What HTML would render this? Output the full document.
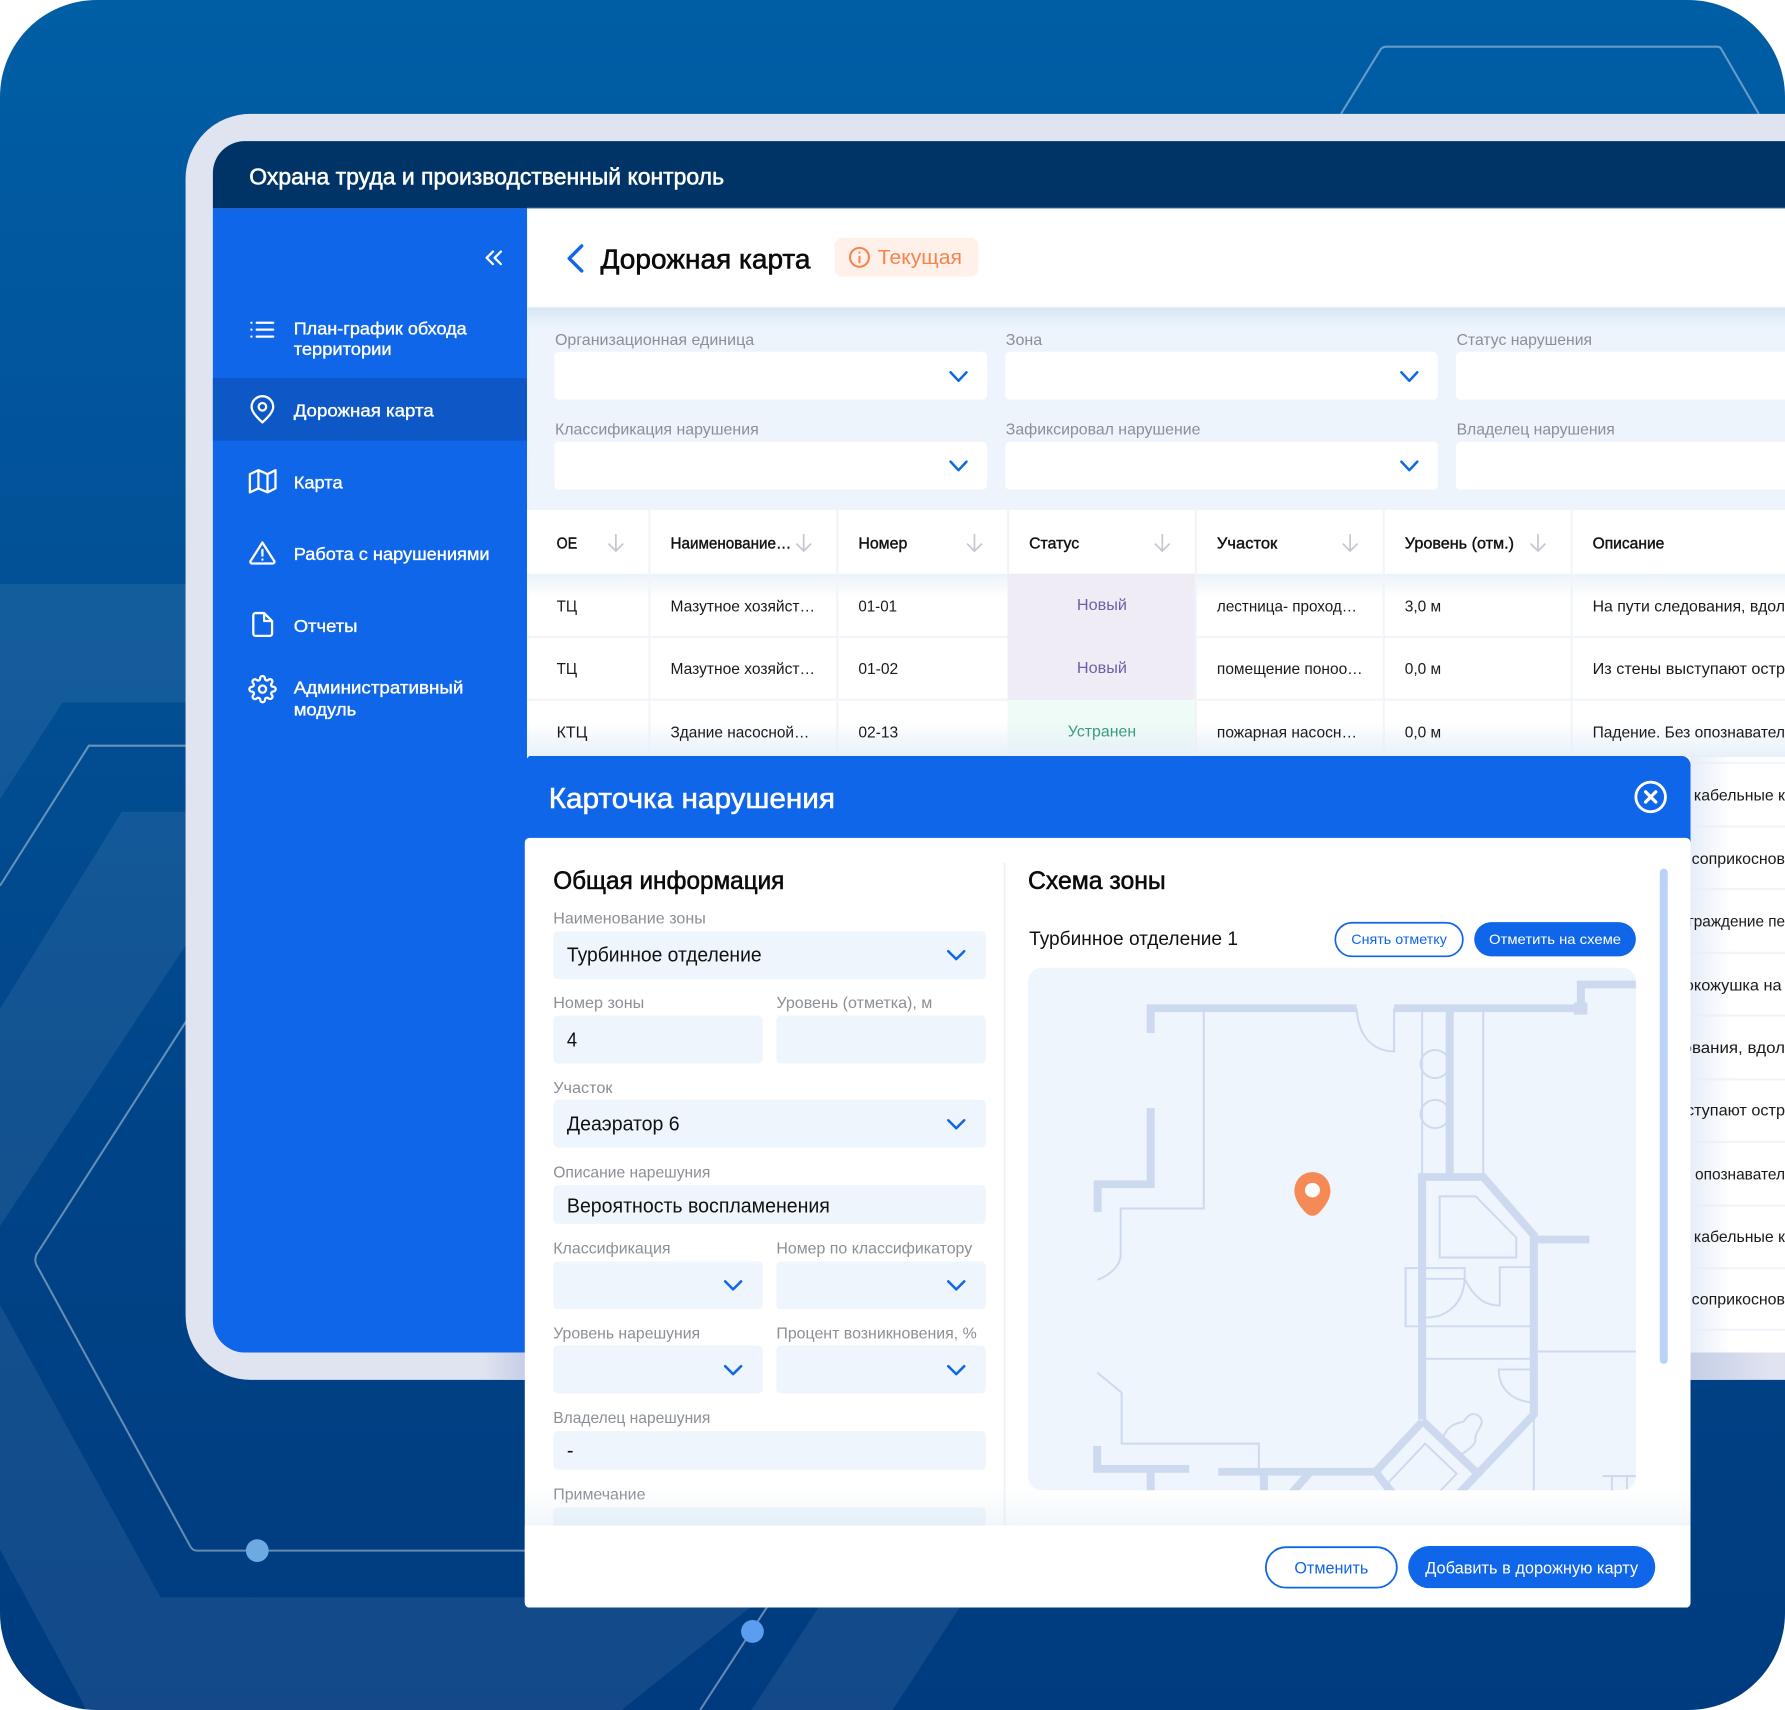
<!DOCTYPE html>
<html lang="ru"><head><meta charset="utf-8"><title>Карточка нарушения</title>
<style>
html,body{margin:0;padding:0;background:#fff}
svg{display:block}
text{font-family:"Liberation Sans",sans-serif;white-space:pre}
.m{stroke-width:.5px;paint-order:stroke}
.lb{font-size:14px;fill:#8b8f96}
.c{font-size:14px;fill:#1a1a1a}
.h{font-size:14px;fill:#111;stroke:#111;stroke-width:.35px}
.s{font-size:15.5px;fill:#fff;stroke:#fff;stroke-width:.32px}
.v{font-size:17.5px;fill:#111}
.w{fill:none;stroke:#cdd9ee;stroke-width:16}
.t{fill:none;stroke:#cdd9ee;stroke-width:4}
.ch{fill:none;stroke:#1066e8;stroke-width:2.2;stroke-linecap:round;stroke-linejoin:round}
.ar{fill:none;stroke:#c3c8d2;stroke-width:1.5}
.ic{fill:none;stroke:#fff;stroke-width:2;stroke-linecap:round;stroke-linejoin:round}
</style></head><body>
<svg xmlns="http://www.w3.org/2000/svg" width="1785" height="1710" viewBox="0 0 1568 1502" preserveAspectRatio="none">
<defs>
<linearGradient id="bg" x1="0" y1="0" x2="0" y2="1"><stop offset="0" stop-color="#005ea5"/><stop offset=".33" stop-color="#025197"/><stop offset=".7" stop-color="#004386"/><stop offset="1" stop-color="#003b7f"/></linearGradient>
<linearGradient id="fp" x1="0" y1="0" x2="0" y2="1"><stop offset="0" stop-color="#d6e7f4"/><stop offset="1" stop-color="#edf4fb"/></linearGradient>
<linearGradient id="rw" x1="0" y1="0" x2="0" y2="1"><stop offset="0" stop-color="#ecf3fa"/><stop offset="1" stop-color="#ecf3fa" stop-opacity="0"/></linearGradient>
<linearGradient id="up" x1="0" y1="1" x2="0" y2="0"><stop offset="0" stop-color="#e6eff8" stop-opacity=".95"/><stop offset="1" stop-color="#e6eff8" stop-opacity="0"/></linearGradient>
<linearGradient id="rt" x1="0" y1="0" x2="1" y2="0"><stop offset="0" stop-color="#e4ecf8" stop-opacity=".9"/><stop offset="1" stop-color="#e4ecf8" stop-opacity="0"/></linearGradient>
<linearGradient id="fr" x1="0" y1="0" x2="1" y2="0"><stop offset="0" stop-color="#c5cee6"/><stop offset="1" stop-color="#c5cee6" stop-opacity="0"/></linearGradient>
<linearGradient id="fl" x1="1" y1="0" x2="0" y2="0"><stop offset="0" stop-color="#c5cee6"/><stop offset="1" stop-color="#c5cee6" stop-opacity="0"/></linearGradient>
<linearGradient id="fd" x1="0" y1="0" x2="0" y2="1"><stop offset="0" stop-color="#dbe8f4" stop-opacity="0"/><stop offset="1" stop-color="#dbe8f4" stop-opacity=".38"/></linearGradient>
<clipPath id="mapc"><rect x="903" y="850" width="534" height="459" rx="12"/></clipPath>
<clipPath id="bgc"><rect width="1568" height="1502" rx="85"/></clipPath>
</defs>

<g clip-path="url(#bgc)">
<rect width="1568" height="1502" fill="url(#bg)"/>
<g fill="#fff" fill-opacity=".075">
<path d="M0,513H163V617H55L0,702Z"/>
<path d="M107,713H170V820L0,1077V886Z"/>
<path d="M0,1146L141,1403H670L546,1502H76L0,1361Z"/>
<path d="M719,1412H843L784,1502H660Z"/>
</g>
<g fill="none" stroke="#fff" stroke-opacity=".4" stroke-width="1.8">
<path d="M170,655H78L0,778"/>
<path d="M170,887L32,1102Q30,1107 32,1111L167,1358Q169,1362 173,1362H470"/>
<path d="M680,1402L615,1502"/>
<path d="M1178,100L1213,43Q1215,41 1218,41H1508Q1511,41 1512,43L1545,100"/>
</g>
<circle cx="226" cy="1362" r="10" fill="#6eaae2"/>
<circle cx="661" cy="1433" r="10" fill="#5c9df0"/>

<!-- frame -->
<path d="M1600,100H220A57,57 0 0 0 163,157V1155A57,57 0 0 0 220,1212H1600Z" fill="#e0e3f0"/>
<path d="M1600,124H215A28,28 0 0 0 187,152V183H1600Z" fill="#003366"/>
<rect x="463" y="183" width="1140" height="1005" fill="#fff"/>
<path d="M187,183H463V1188H215A28,28 0 0 1 187,1160Z" fill="#1066e8"/>
<rect x="187" y="332" width="276" height="55" fill="#0d57c6"/>
<rect x="463" y="182.5" width="1110" height="1" fill="#9fb4cf"/>
<text x="219" y="162" font-size="20" fill="#fff" stroke="#fff" class="m" textLength="417" lengthAdjust="spacingAndGlyphs">Охрана труда и производственный контроль</text>

<!-- sidebar -->
<path class="ic" d="M440,221L434.500,226.500L440,232M433,221L427.500,226.500L433,232" stroke-width="1.8"/>
<g class="ic">
<path d="M225.500,283.500H240M225.500,289.500H240M225.500,295.700H240"/>
<path d="M220.800,283.500h.1M220.800,289.500h.1M220.800,295.700h.1"/>
<path d="M230.500,371C226,367 221,362 221,357.500A9.500,9.500 0 0 1 240,357.500C240,362 235,367 230.500,371Z"/>
<circle cx="230.500" cy="357.300" r="3.300"/>
<path d="M219.500,416.500L227,413L235,416.500L242,413V429L235,432.500L227,429L219.500,432.500ZM227,413V429M235,416.500V432.500"/>
<path d="M230.500,476.500L220,493A1.500,1.500 0 0 0 221.300,495H239.700A1.500,1.500 0 0 0 241,493ZM230.500,483V488M230.500,491.500h.1"/>
<path d="M224.500,538.500H232L239,545.500V556.500A2,2 0 0 1 237,558.500H224.500A2,2 0 0 1 222.500,556.500V540.500A2,2 0 0 1 224.500,538.500ZM232,538.500V545.500H239"/>
<g transform="translate(218,592.700) scale(1.05)" stroke-width="1.9"><circle cx="12" cy="12" r="3"/><path d="M19.4 15a1.65 1.65 0 0 0 .33 1.82l.06.06a2 2 0 0 1 0 2.83 2 2 0 0 1-2.83 0l-.06-.06a1.65 1.65 0 0 0-1.82-.33 1.65 1.65 0 0 0-1 1.51V21a2 2 0 0 1-2 2 2 2 0 0 1-2-2v-.09A1.65 1.65 0 0 0 9 19.4a1.65 1.65 0 0 0-1.82.33l-.06.06a2 2 0 0 1-2.83 0 2 2 0 0 1 0-2.83l.06-.06a1.65 1.65 0 0 0 .33-1.82 1.65 1.65 0 0 0-1.51-1H3a2 2 0 0 1-2-2 2 2 0 0 1 2-2h.09A1.65 1.65 0 0 0 4.600 9a1.65 1.65 0 0 0-.33-1.82l-.06-.06a2 2 0 0 1 0-2.83 2 2 0 0 1 2.83 0l.06.06a1.65 1.65 0 0 0 1.82.33H9a1.65 1.65 0 0 0 1-1.51V3a2 2 0 0 1 2-2 2 2 0 0 1 2 2v.09a1.65 1.65 0 0 0 1 1.51 1.65 1.65 0 0 0 1.82-.33l.06-.06a2 2 0 0 1 2.83 0 2 2 0 0 1 0 2.83l-.06.06a1.65 1.65 0 0 0-.33 1.82V9a1.65 1.65 0 0 0 1.51 1H21a2 2 0 0 1 2 2 2 2 0 0 1-2 2h-.09a1.65 1.65 0 0 0-1.51 1z"/></g>
</g>
<text class="s" x="258" y="294" textLength="152" lengthAdjust="spacingAndGlyphs">План-график обхода</text>
<text class="s" x="258" y="312" textLength="86" lengthAdjust="spacingAndGlyphs">территории</text>
<text class="s" x="258" y="366" textLength="123" lengthAdjust="spacingAndGlyphs">Дорожная карта</text>
<text class="s" x="258" y="429" textLength="43" lengthAdjust="spacingAndGlyphs">Карта</text>
<text class="s" x="258" y="492" textLength="172" lengthAdjust="spacingAndGlyphs">Работа с нарушениями</text>
<text class="s" x="258" y="555" textLength="56" lengthAdjust="spacingAndGlyphs">Отчеты</text>
<text class="s" x="258" y="609" textLength="149" lengthAdjust="spacingAndGlyphs">Административный</text>
<text class="s" x="258" y="628.500" textLength="55" lengthAdjust="spacingAndGlyphs">модуль</text>

<!-- page head -->
<path d="M511,216L500,227L511,238" fill="none" stroke="#1066e8" stroke-width="3" stroke-linecap="round" stroke-linejoin="round"/>
<text x="527.500" y="236" font-size="24" fill="#0b0b0b" stroke="#0b0b0b" class="m" textLength="184.500" lengthAdjust="spacingAndGlyphs">Дорожная карта</text>
<rect x="733" y="209" width="126.500" height="34" rx="7" fill="#fff1ea"/>
<circle cx="755" cy="226" r="8.300" fill="none" stroke="#f5844c" stroke-width="1.800"/>
<path d="M755,225.500V230.500M755,221.800v.1" stroke="#f5844c" stroke-width="1.800" stroke-linecap="round"/>
<text x="771" y="232" font-size="18" fill="#f5844c" textLength="74" lengthAdjust="spacingAndGlyphs">Текущая</text>

<!-- filters -->
<rect x="463" y="270" width="1110" height="178" fill="#edf4fb"/>
<rect x="463" y="270" width="1110" height="18" fill="url(#fp)"/>
<g class="lb">
<text x="487.500" y="303" textLength="175" lengthAdjust="spacingAndGlyphs">Организационная единица</text>
<text x="883.500" y="303" textLength="32" lengthAdjust="spacingAndGlyphs">Зона</text>
<text x="1279.500" y="303" textLength="119" lengthAdjust="spacingAndGlyphs">Статус нарушения</text>
<text x="487.500" y="381.500" textLength="179" lengthAdjust="spacingAndGlyphs">Классификация нарушения</text>
<text x="883.500" y="381.500" textLength="171" lengthAdjust="spacingAndGlyphs">Зафиксировал нарушение</text>
<text x="1279.500" y="381.500" textLength="139" lengthAdjust="spacingAndGlyphs">Владелец нарушения</text>
</g>
<g fill="#fff">
<rect x="487" y="309" width="380" height="42" rx="4"/><rect x="883" y="309" width="380" height="42" rx="4"/><rect x="1279" y="309" width="320" height="42" rx="4"/>
<rect x="487" y="388" width="380" height="42" rx="4"/><rect x="883" y="388" width="380" height="42" rx="4"/><rect x="1279" y="388" width="320" height="42" rx="4"/>
</g>
<path class="ch" d="M835,327L842,334.500L849,327M1231,327L1238,334.500L1245,327M835,405.500L842,413L849,405.500M1231,405.500L1238,413L1245,405.500"/>

<!-- table -->
<rect x="463" y="448" width="1110" height="720" fill="#fff"/>
<rect x="463" y="504" width="1110" height="22" fill="url(#rw)"/>
<rect x="885" y="504" width="165" height="111" fill="#efecf6"/>
<rect x="885" y="615" width="165" height="60" fill="#eefbf6"/>
<g fill="#f1f5fa">
<rect x="569.500" y="448" width="2" height="230"/><rect x="734.500" y="448" width="2" height="230"/><rect x="884.500" y="448" width="2" height="56"/><rect x="1049.500" y="448" width="2" height="230"/><rect x="1214.500" y="448" width="2" height="230"/><rect x="1379.500" y="448" width="2" height="230"/>
<rect x="463" y="558.500" width="422" height="2"/><rect x="1050" y="558.500" width="520" height="2"/>
<rect x="463" y="613.500" width="422" height="2"/><rect x="1050" y="613.500" width="520" height="2"/>
<rect x="1050" y="669" width="520" height="2"/><rect x="1050" y="725" width="520" height="2"/><rect x="1050" y="780" width="520" height="2"/><rect x="1050" y="836" width="520" height="2"/><rect x="1050" y="891" width="520" height="2"/><rect x="1050" y="947" width="520" height="2"/><rect x="1050" y="1002" width="520" height="2"/><rect x="1050" y="1058" width="520" height="2"/><rect x="1050" y="1113" width="520" height="2"/><rect x="1050" y="1167" width="520" height="2"/>
</g>
<rect x="463" y="634" width="1110" height="31" fill="url(#up)"/>
<rect x="1485" y="664" width="36" height="524" fill="url(#rt)"/>
<path class="ar" d="M541,469V484M534.500,477.500L541,484L547.500,477.500M706,469V484M699.500,477.500L706,484L712.500,477.500M856,469V484M849.500,477.500L856,484L862.500,477.500M1021,469V484M1014.500,477.500L1021,484L1027.500,477.500M1186,469V484M1179.500,477.500L1186,484L1192.500,477.500M1351,469V484M1344.500,477.500L1351,484L1357.500,477.500"/>
<g class="h">
<text x="489" y="482" textLength="18" lengthAdjust="spacingAndGlyphs">ОЕ</text>
<text x="589" y="482" textLength="106" lengthAdjust="spacingAndGlyphs">Наименование…</text>
<text x="754" y="482" textLength="43" lengthAdjust="spacingAndGlyphs">Номер</text>
<text x="904" y="482" textLength="44" lengthAdjust="spacingAndGlyphs">Статус</text>
<text x="1069" y="482" textLength="53" lengthAdjust="spacingAndGlyphs">Участок</text>
<text x="1234" y="482" textLength="96" lengthAdjust="spacingAndGlyphs">Уровень (отм.)</text>
<text x="1399" y="482" textLength="63" lengthAdjust="spacingAndGlyphs">Описание</text>
</g>
<g class="c">
<text x="489" y="537" textLength="18" lengthAdjust="spacingAndGlyphs">ТЦ</text><text x="589" y="537" textLength="127" lengthAdjust="spacingAndGlyphs">Мазутное хозяйст…</text><text x="754" y="537" textLength="34" lengthAdjust="spacingAndGlyphs">01-01</text><text x="1069" y="537" textLength="123" lengthAdjust="spacingAndGlyphs">лестница- проход…</text><text x="1234" y="537" textLength="32" lengthAdjust="spacingAndGlyphs">3,0 м</text><text x="1399" y="537" textLength="169" lengthAdjust="spacingAndGlyphs">На пути следования, вдол</text>
<text x="489" y="592" textLength="18" lengthAdjust="spacingAndGlyphs">ТЦ</text><text x="589" y="592" textLength="127" lengthAdjust="spacingAndGlyphs">Мазутное хозяйст…</text><text x="754" y="592" textLength="35" lengthAdjust="spacingAndGlyphs">01-02</text><text x="1069" y="592" textLength="128" lengthAdjust="spacingAndGlyphs">помещение поноо…</text><text x="1234" y="592" textLength="32" lengthAdjust="spacingAndGlyphs">0,0 м</text><text x="1399" y="592" textLength="169" lengthAdjust="spacingAndGlyphs">Из стены выступают остр</text>
<text x="489" y="648" textLength="27" lengthAdjust="spacingAndGlyphs">КТЦ</text><text x="589" y="648" textLength="122" lengthAdjust="spacingAndGlyphs">Здание насосной…</text><text x="754" y="648" textLength="35" lengthAdjust="spacingAndGlyphs">02-13</text><text x="1069" y="648" textLength="123" lengthAdjust="spacingAndGlyphs">пожарная насосн…</text><text x="1234" y="648" textLength="32" lengthAdjust="spacingAndGlyphs">0,0 м</text><text x="1399" y="648" textLength="169" lengthAdjust="spacingAndGlyphs">Падение. Без опознавател</text>
<text x="1488" y="703" textLength="80" lengthAdjust="spacingAndGlyphs">кабельные к</text>
<text x="1486" y="759" textLength="82" lengthAdjust="spacingAndGlyphs">соприкоснов</text>
<text x="1483" y="814" textLength="85" lengthAdjust="spacingAndGlyphs">граждение пе</text>
<text x="1480" y="870" textLength="85" lengthAdjust="spacingAndGlyphs">окожушка на</text>
<text x="1478" y="925" textLength="90" lengthAdjust="spacingAndGlyphs">ования, вдол</text>
<text x="1481" y="980" textLength="87" lengthAdjust="spacingAndGlyphs">ступают остр</text>
<text x="1489" y="1036" textLength="79" lengthAdjust="spacingAndGlyphs">опознавател</text>
<text x="1488" y="1091" textLength="80" lengthAdjust="spacingAndGlyphs">кабельные к</text>
<text x="1486" y="1146" textLength="82" lengthAdjust="spacingAndGlyphs">соприкоснов</text>
</g>
<g font-size="14">
<text x="946" y="536" fill="#6f5ea8" textLength="44" lengthAdjust="spacingAndGlyphs">Новый</text>
<text x="946" y="591" fill="#6f5ea8" textLength="44" lengthAdjust="spacingAndGlyphs">Новый</text>
<text x="938" y="647" fill="#3c9a86" textLength="60" lengthAdjust="spacingAndGlyphs">Устранен</text>
</g>
<rect x="1485" y="1188" width="70" height="24" fill="url(#fr)"/>
<rect x="425" y="1188" width="37" height="24" fill="url(#fl)"/>

<!-- card -->
<path d="M465,664H1477A8,8 0 0 1 1485,672V740H461V668Z" fill="#1066e8"/>
<path d="M465,736H1481A4,4 0 0 1 1485,740V1408A4,4 0 0 1 1481,1412H465A4,4 0 0 1 461,1408V740A4,4 0 0 1 465,736Z" fill="#fff"/>
<text x="482" y="709.500" font-size="25.500" fill="#fff" stroke="#fff" class="m" textLength="251.500" lengthAdjust="spacingAndGlyphs">Карточка нарушения</text>
<circle cx="1450" cy="700" r="13" fill="none" stroke="#fff" stroke-width="2.500"/>
<path d="M1445.500,695.500L1454.500,704.500M1454.500,695.500L1445.500,704.500" stroke="#fff" stroke-width="2.800" stroke-linecap="round"/>

<text x="486" y="781" font-size="22" fill="#0b0b0b" stroke="#0b0b0b" class="m" textLength="203" lengthAdjust="spacingAndGlyphs">Общая информация</text>
<text x="903" y="781" font-size="22" fill="#0b0b0b" stroke="#0b0b0b" class="m" textLength="121" lengthAdjust="spacingAndGlyphs">Схема зоны</text>
<rect x="881.500" y="758" width="2" height="582" fill="#f0f4fa"/>

<g fill="#eef5fc">
<rect x="486" y="818" width="380" height="42" rx="4"/>
<rect x="486" y="892" width="184" height="42" rx="4"/><rect x="682" y="892" width="184" height="42" rx="4"/>
<rect x="486" y="966" width="380" height="42" rx="4"/>
<rect x="486" y="1041" width="380" height="34" rx="4"/>
<rect x="486" y="1108" width="184" height="42" rx="4"/><rect x="682" y="1108" width="184" height="42" rx="4"/>
<rect x="486" y="1182" width="184" height="42" rx="4"/><rect x="682" y="1182" width="184" height="42" rx="4"/>
<rect x="486" y="1257" width="380" height="34" rx="4"/>
<rect x="486" y="1324" width="380" height="20" rx="4"/>
</g>
<g class="lb">
<text x="486" y="811" textLength="134" lengthAdjust="spacingAndGlyphs">Наименование зоны</text>
<text x="486" y="885.500" textLength="80" lengthAdjust="spacingAndGlyphs">Номер зоны</text>
<text x="682" y="885.500" textLength="137" lengthAdjust="spacingAndGlyphs">Уровень (отметка), м</text>
<text x="486" y="960" textLength="52" lengthAdjust="spacingAndGlyphs">Участок</text>
<text x="486" y="1034.500" textLength="138" lengthAdjust="spacingAndGlyphs">Описание нарешуния</text>
<text x="486" y="1101" textLength="103" lengthAdjust="spacingAndGlyphs">Классификация</text>
<text x="682" y="1101" textLength="172" lengthAdjust="spacingAndGlyphs">Номер по классификатору</text>
<text x="486" y="1175.500" textLength="129" lengthAdjust="spacingAndGlyphs">Уровень нарешуния</text>
<text x="682" y="1175.500" textLength="176" lengthAdjust="spacingAndGlyphs">Процент возникновения, %</text>
<text x="486" y="1250" textLength="138" lengthAdjust="spacingAndGlyphs">Владелец нарешуния</text>
<text x="486" y="1317" textLength="81" lengthAdjust="spacingAndGlyphs">Примечание</text>
</g>
<g class="v">
<text x="498" y="844.500" textLength="171" lengthAdjust="spacingAndGlyphs">Турбинное отделение</text>
<text x="498" y="919" textLength="9" lengthAdjust="spacingAndGlyphs">4</text>
<text x="498" y="993" textLength="99" lengthAdjust="spacingAndGlyphs">Деаэратор 6</text>
<text x="498" y="1065" textLength="231" lengthAdjust="spacingAndGlyphs">Вероятность воспламенения</text>
<text x="498" y="1280">-</text>
</g>
<path class="ch" d="M833,835.500L840,842.500L847,835.500M833,984L840,991L847,984M637,1125.500L644,1132.500L651,1125.500M833,1125.500L840,1132.500L847,1125.500M637,1200L644,1207L651,1200M833,1200L840,1207L847,1200"/>

<text x="904" y="830" font-size="17" fill="#111" textLength="183.500" lengthAdjust="spacingAndGlyphs">Турбинное отделение 1</text>
<rect x="1173" y="810.500" width="112" height="29.500" rx="14.700" fill="#fff" stroke="#1066e8" stroke-width="1.500"/>
<text x="1187" y="829" font-size="12.500" fill="#1066e8" textLength="84" lengthAdjust="spacingAndGlyphs">Снять отметку</text>
<rect x="1295" y="810" width="142" height="30" rx="15" fill="#1066e8"/>
<text x="1308" y="829" font-size="12.500" fill="#fff" textLength="116" lengthAdjust="spacingAndGlyphs">Отметить на схеме</text>

<rect x="903" y="850" width="534" height="459" rx="12" fill="#eef5fc"/>
<g clip-path="url(#mapc)"><g transform="translate(878.4,737.9) scale(.4399,.4258)">
<path class="w" d="M301,398V347H712M787,347H1160M1160,345V298H1270"/>
<rect x="1146" y="335" width="27" height="25" fill="#cdd9ee"/>
<path class="w" d="M301,553V710H195V767"/>
<path class="w" d="M843,1195V695H965L1066,815V1185L915,1350"/>
<path class="w" d="M898,350V690M1066,824H1177"/>
<path class="w" d="M843,1197L949,1302M843,1200L750,1303M436,1303H750M750,1303L785,1350"/>
<path class="w" d="M194,1250V1297H378M301,1297V1350M527,1303V1350M620,1303L580,1350"/>
<path class="t" d="M843,352V690"/><path class="t" stroke-width="2.500" d="M965,352V690"/>
<circle class="t" cx="869" cy="462" r="29"/><circle class="t" cx="869" cy="565" r="29"/>
<path class="t" d="M712,347C715,400 740,435 787,436V347"/>
<path class="t" stroke-width="3" d="M407,352V760H241V855C241,880 215,900 194,907"/>
<path class="t" d="M878,735H950L1031,820V861H878Z"/>
<path class="t" d="M850,883H928V905H850M843,883H810V1003H1060M928,905C925,960 890,985 850,985M928,905C945,940 965,960 998,960V881H1060"/>
<path class="t" d="M850,1070H1060"/><path class="t" stroke-width="2" d="M1073,1055H1270"/>
<path class="t" d="M1060,1092H996C996,1130 1020,1155 1060,1160"/>
<path class="t" stroke-width="3" d="M194,1098L243,1140V1245H517V1300"/>
<path class="t" d="M877,1345L912,1307L849,1245L775,1326L790,1345"/>
<path class="t" d="M885,1231C893,1213 903,1204 925,1200C932,1192 936,1184 945,1184C957,1184 966,1196 960,1208C953,1222 949,1224 949,1240C948,1248 935,1258 922,1267"/>
<path class="t" stroke-width="2" d="M1066,1190V1350"/>
<path class="t" stroke-width="3" d="M1203,1312H1270M1222,1312V1350M1252,1312V1350"/>
<path d="M624,685C645,685 660,702 660,724C660,742 646,760 637,769C630,777 618,777 611,769C602,760 588,742 588,724C588,702 603,685 624,685Z" fill="#f58a56"/>
<circle cx="624" cy="722" r="15" fill="#fff"/>
</g></g>
<rect x="1458" y="763" width="7" height="435" rx="3.500" fill="#b9d2f5"/>

<rect x="461" y="1309" width="1024" height="31" fill="url(#fd)"/>
<path d="M461,1340H1485V1408A4,4 0 0 1 1481,1412H465A4,4 0 0 1 461,1408Z" fill="#fff"/>
<rect x="1112" y="1359" width="115" height="35.500" rx="17.700" fill="#fff" stroke="#1066e8" stroke-width="1.600"/>
<text x="1137" y="1382" font-size="15" fill="#1066e8" textLength="65" lengthAdjust="spacingAndGlyphs">Отменить</text>
<rect x="1237" y="1358" width="217" height="37" rx="18.500" fill="#1066e8"/>
<text x="1252" y="1382" font-size="15" fill="#fff" textLength="187" lengthAdjust="spacingAndGlyphs">Добавить в дорожную карту</text>
</g>
</svg>
</body></html>
